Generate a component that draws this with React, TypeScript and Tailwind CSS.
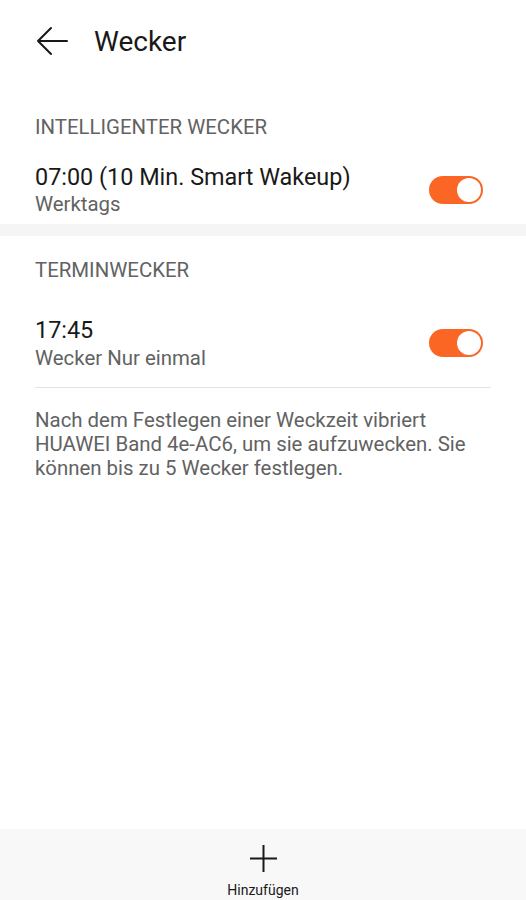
import React from "react";

function Toggle() {
  return (
    <div className="mr-[8px] w-[54px] h-[28px] rounded-full bg-[#fb6625] flex items-center justify-end pr-[2px] shrink-0">
      <div className="w-[24px] h-[24px] rounded-full bg-white" />
    </div>
  );
}

export default function App() {
  return (
    <div
      className="w-[526px] h-[900px] bg-white flex flex-col text-[#191919]"
      style={{ fontFamily: "Roboto, 'Noto Sans', sans-serif" }}
    >
      <div className="h-[84px] flex items-center pl-[36px] shrink-0">
        <svg width="32" height="30" viewBox="0 0 32 30" fill="none" className="-mt-[3px]">
          <path d="M2 15 H31 M15 2 L2 15 L15 28" stroke="#191919" strokeWidth="2" strokeLinecap="round" strokeLinejoin="round" />
        </svg>
        <div className="ml-[26px] text-[28px] leading-[32px]">Wecker</div>
      </div>

      <div className="px-[35px] pt-[31px] pb-[8px]">
        <div className="text-[20.4px] leading-[24px] text-[#626262]">INTELLIGENTER WECKER</div>
        <div className="mt-[24px] flex items-center justify-between">
          <div>
            <div className="text-[23.4px] leading-[28px]">07:00 (10 Min. Smart Wakeup)</div>
            <div className="mt-[1px] text-[20.4px] leading-[24px] text-[#626262]">Werktags</div>
          </div>
          <Toggle />
        </div>
      </div>

      <div className="h-[12px] bg-[#f5f5f5] shrink-0" />

      <div className="px-[35px] pt-[22px]">
        <div className="text-[20.4px] leading-[24px] text-[#626262]">TERMINWECKER</div>
        <div className="mt-[34px] flex items-center justify-between">
          <div>
            <div className="text-[23.4px] leading-[28px]">17:45</div>
            <div className="mt-[2px] text-[20.4px] leading-[24px] text-[#626262]">Wecker Nur einmal</div>
          </div>
          <Toggle />
        </div>
        <div className="mt-[17px] h-px bg-[#e2e2e2]" />
        <p className="pt-[20px] text-[20.4px] leading-[24px] text-[#626262]">
          Nach dem Festlegen einer Weckzeit vibriert HUAWEI Band 4e-AC6, um sie aufzuwecken. Sie können bis zu 5 Wecker festlegen.
        </p>
      </div>

      <div className="flex-1" />

      <div className="h-[71px] bg-[#f8f8f8] flex flex-col items-center pt-[16px] shrink-0">
        <svg width="27" height="27" viewBox="0 0 27 27" fill="none">
          <path d="M13.5 0 V27 M0 13.5 H27" stroke="#191919" strokeWidth="2" />
        </svg>
        <div className="mt-[10px] text-[14px] leading-[16px]">Hinzufügen</div>
      </div>
    </div>
  );
}
